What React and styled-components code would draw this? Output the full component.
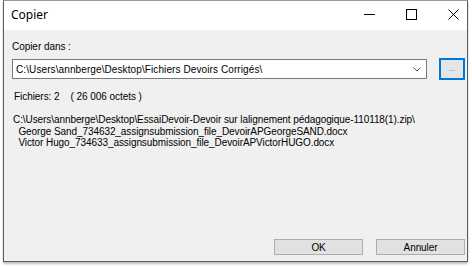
import React from 'react';
import styled, { createGlobalStyle } from 'styled-components';

const GlobalStyle = createGlobalStyle`
  html, body {
    margin: 0;
    padding: 0;
    background: #ffffff;
  }
  body {
    font-family: "Liberation Sans", Arial, sans-serif;
  }
`;

const Page = styled.div`
  width: 472px;
  height: 267px;
  padding: 0 0 0 3px;
  box-sizing: border-box;
`;

const Window = styled.div`
  width: 465px;
  height: 262px;
  box-sizing: border-box;
  border: 1px solid #5a5a5a;
  border-top-color: #9a9a9a;
  box-shadow: 0 2px 2px rgba(0, 0, 0, 0.25);
  display: flex;
  flex-direction: column;
  background: #f0f0f0;
`;

const TitleBar = styled.div`
  height: 29px;
  background: #ffffff;
  display: flex;
  align-items: center;
  padding-left: 7px;
  flex-shrink: 0;
`;

const Title = styled.div`
  font-family: "Noto Sans", "Liberation Sans", sans-serif;
  font-size: 12px;
  color: #000;
  flex: 1;
  margin-top: -3px;
`;

const Controls = styled.div`
  display: flex;
  align-items: center;
  gap: 31px;
  padding-right: 8px;
  margin-top: -3px;
`;

const ControlButton = styled.div`
  width: 11px;
  height: 11px;
  display: flex;
`;

const Body = styled.div`
  flex: 1;
  display: flex;
  flex-direction: column;
  padding: 11px 0 0 8px;
  font-size: 10px;
  color: #000;
`;

const Label = styled.div`
  font-size: 10px;
  line-height: 12px;
  letter-spacing: -0.05px;
`;

const PathRow = styled.div`
  display: flex;
  align-items: center;
  margin-top: 5px;
`;

const Combo = styled.div`
  width: 415px;
  height: 20px;
  box-sizing: border-box;
  border: 1px solid #7a7a7a;
  background: #ffffff;
  display: flex;
  align-items: center;
  padding-left: 3px;
  font-size: 10px;
  letter-spacing: 0.1px;
`;

const ComboText = styled.span`
  flex: 1;
`;

const Chevron = styled.span`
  width: 18px;
  display: flex;
  justify-content: center;
`;

const BrowseButton = styled.div`
  width: 26px;
  height: 22px;
  margin-left: 12px;
  box-sizing: border-box;
  border: 2px solid #0078d7;
  background: #e5e5e5;
  display: flex;
  align-items: center;
  justify-content: center;
  color: #777;
  font-size: 8px;
  padding-bottom: 2px;
`;

const Summary = styled.div`
  margin-top: 11px;
  margin-left: 2px;
  font-size: 10px;
  line-height: 12px;
  letter-spacing: -0.05px;
  white-space: pre;
`;

const FileList = styled.div`
  margin-top: 11px;
  margin-left: 1px;
  font-size: 10px;
  line-height: 11.5px;
  letter-spacing: -0.08px;
  white-space: pre;
`;

const Footer = styled.div`
  margin-top: auto;
  display: flex;
  justify-content: flex-end;
  gap: 13px;
  padding: 0 2px 6px 0;
`;

const DialogButton = styled.div`
  width: 89px;
  height: 16px;
  box-sizing: border-box;
  border: 1px solid #adadad;
  background: #e1e1e1;
  display: flex;
  align-items: center;
  justify-content: center;
  font-size: 10px;
  letter-spacing: -0.1px;
`;

const files = [
  'C:\\Users\\annberge\\Desktop\\EssaiDevoir-Devoir sur lalignement pédagogique-110118(1).zip\\',
  '  George Sand_734632_assignsubmission_file_DevoirAPGeorgeSAND.docx',
  '  Victor Hugo_734633_assignsubmission_file_DevoirAPVictorHUGO.docx',
];

export default function App() {
  return (
    <Page>
      <GlobalStyle />
      <Window>
        <TitleBar>
          <Title>Copier</Title>
          <Controls>
            <ControlButton>
              <svg width="11" height="11" viewBox="0 0 11 11">
                <path d="M0 5.5h11" stroke="#000" strokeWidth="1" />
              </svg>
            </ControlButton>
            <ControlButton>
              <svg width="11" height="11" viewBox="0 0 11 11">
                <rect x="0.5" y="0.5" width="10" height="10" fill="none" stroke="#000" strokeWidth="1" />
              </svg>
            </ControlButton>
            <ControlButton>
              <svg width="11" height="11" viewBox="0 0 11 11">
                <path d="M0.5 0.5l10 10M10.5 0.5l-10 10" stroke="#000" strokeWidth="1" />
              </svg>
            </ControlButton>
          </Controls>
        </TitleBar>
        <Body>
          <Label>Copier dans :</Label>
          <PathRow>
            <Combo>
              <ComboText>C:\Users\annberge\Desktop\Fichiers Devoirs Corrigés\</ComboText>
              <Chevron>
                <svg width="8" height="5" viewBox="0 0 8 5">
                  <path d="M0.5 0.5l3.5 3.5 3.5-3.5" fill="none" stroke="#555" strokeWidth="1" />
                </svg>
              </Chevron>
            </Combo>
            <BrowseButton>...</BrowseButton>
          </PathRow>
          <Summary>{'Fichiers: 2    ( 26 006 octets )'}</Summary>
          <FileList>
            {files.map((line) => (
              <div key={line}>{line}</div>
            ))}
          </FileList>
          <Footer>
            <DialogButton>OK</DialogButton>
            <DialogButton>Annuler</DialogButton>
          </Footer>
        </Body>
      </Window>
    </Page>
  );
}
